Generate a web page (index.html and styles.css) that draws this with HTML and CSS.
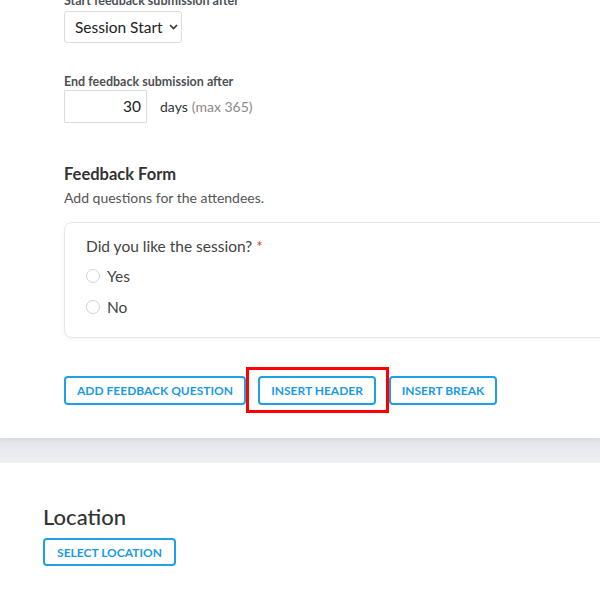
FILE: index.html
```html
<!DOCTYPE html>
<html>
<head>
<meta charset="utf-8">
<link rel="stylesheet" href="styles.css">
</head>
<body>
<section class="panel">
  <div class="field-label first">Start feedback submission after</div>
  <div class="select">
    <span>Session Start</span>
    <svg class="chev" width="9" height="6" viewBox="0 0 9 6"><path d="M1 1l3.5 3.5L8 1" fill="none" stroke="#333" stroke-width="1.6"/></svg>
  </div>

  <div class="field-label second">End feedback submission after</div>
  <div class="days-row">
    <div class="num-input">30</div>
    <span class="days">days</span>
    <span class="max">(max 365)</span>
  </div>

  <h3 class="form-title">Feedback Form</h3>
  <p class="form-sub">Add questions for the attendees.</p>

  <div class="card">
    <div class="question">Did you like the session? <span class="req">*</span></div>
    <div class="option"><span class="radio"></span>Yes</div>
    <div class="option"><span class="radio"></span>No</div>
  </div>

  <div class="actions">
    <button class="btn">ADD FEEDBACK QUESTION</button>
    <button class="btn highlighted">INSERT HEADER</button>
    <button class="btn">INSERT BREAK</button>
  </div>
</section>
<div class="band"></div>
<section class="location">
  <h2 class="loc-title">Location</h2>
  <button class="btn small">SELECT LOCATION</button>
</section>
</body>
</html>
```
FILE: styles.css
```css
html, body {
  margin: 0;
  padding: 0;
  overflow: hidden;
  background: #fff;
  font-family: Lato, "Open Sans", sans-serif;
  color: #333;
}
.panel {
  background: #fff;
  padding: 0 0 33px 64px;
  box-shadow: 0 2px 4px rgba(0,0,0,0.06);
  position: relative;
  z-index: 1;
}
.field-label {
  font-size: 12.5px;
  font-weight: 700;
  line-height: 14px;
  color: #4d5156;
}
.field-label.first {
  margin-top: -6px;
  margin-bottom: 3px;
}
.field-label.second {
  margin-top: 32px;
  margin-bottom: 1px;
}
.select {
  width: 118px;
  height: 32px;
  box-sizing: border-box;
  border: 1px solid #dcdcdc;
  border-radius: 3px;
  display: flex;
  align-items: center;
  justify-content: space-between;
  padding: 0 3px 0 10px;
  font-size: 15.5px;
  color: #222;
}
.days-row {
  display: flex;
  align-items: center;
}
.num-input {
  width: 83px;
  height: 33px;
  box-sizing: border-box;
  border: 1px solid #dcdcdc;
  border-radius: 1px;
  font-size: 15.5px;
  color: #222;
  text-align: right;
  padding: 0 5px;
  line-height: 31px;
}
.days {
  margin-left: 13px;
  font-size: 14px;
  color: #333;
}
.max {
  margin-left: 4px;
  font-size: 14px;
  color: #8a8a8a;
}
.form-title {
  margin: 41px 0 0;
  font-size: 16.5px;
  line-height: 20px;
  font-weight: 700;
  color: #333;
}
.form-sub {
  margin: 5px 0 0;
  font-size: 14px;
  line-height: 18px;
  color: #555;
}
.card {
  margin: 15px -40px 0 0;
  height: 116px;
  box-sizing: border-box;
  border: 1px solid #e6e6e6;
  border-radius: 8px;
  box-shadow: 0 2px 5px rgba(0,0,0,0.04);
  padding: 13px 0 0 21px;
}
.question {
  font-size: 15.5px;
  line-height: 20px;
  color: #444;
}
.req {
  color: #e53935;
}
.option {
  display: flex;
  align-items: center;
  height: 31px;
  font-size: 15.5px;
  color: #444;
}
.option:nth-child(2) {
  margin-top: 4px;
}
.radio {
  width: 14px;
  height: 14px;
  box-sizing: border-box;
  border: 1px solid #cfd3d8;
  border-radius: 50%;
  margin-right: 7px;
}
.actions {
  margin-top: 38px;
  display: flex;
  gap: 12px;
}
.btn {
  height: 29px;
  box-sizing: border-box;
  border: 2px solid #1ea0e4;
  border-radius: 4px;
  background: #fff;
  color: #1a9be0;
  font-family: Lato, "Open Sans", sans-serif;
  font-size: 12px;
  font-weight: 700;
  padding: 0;
  white-space: nowrap;
  position: relative;
}
.actions .btn:nth-child(1) { width: 182px; }
.actions .btn:nth-child(2) { width: 118px; }
.actions .btn:nth-child(3) { width: 108px; margin-left: 1px; }
.highlighted::after {
  content: "";
  position: absolute;
  left: -14px;
  right: -15px;
  top: -11px;
  bottom: -10px;
  border: 3px solid #f00;
}
.band {
  height: 25px;
  background: linear-gradient(#e3e5ea, #edeff3);
}
.location {
  padding: 41px 0 40px 43px;
}
.loc-title {
  margin: 0;
  font-size: 22px;
  line-height: 26px;
  font-weight: 500;
  color: #333;
}
.btn.small {
  margin-top: 8px;
  height: 28px;
  width: 133px;
}
```
